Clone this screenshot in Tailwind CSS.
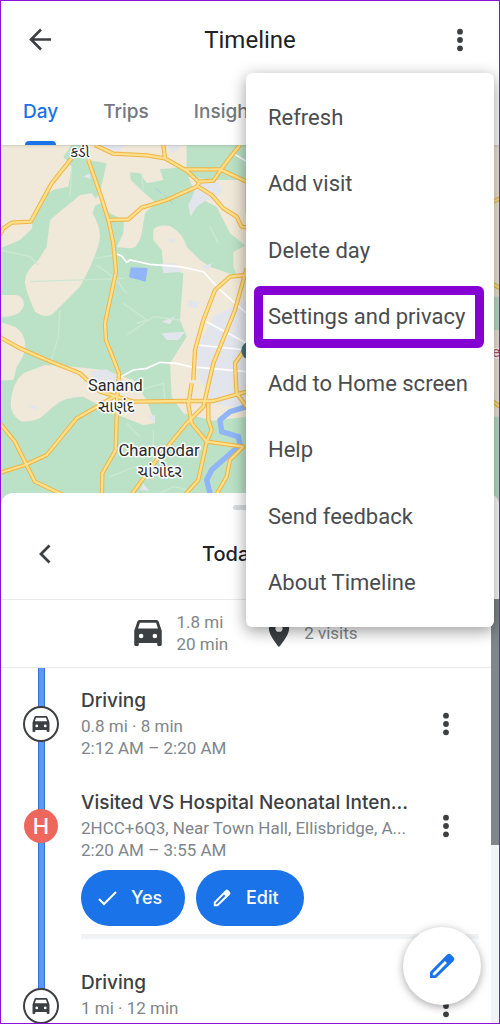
<!DOCTYPE html>
<html lang="en">
<head>
  <meta charset="UTF-8" />
  <meta name="viewport" content="width=device-width, initial-scale=1" />
  <title>Timeline</title>
  <script src="https://cdn.jsdelivr.net/npm/@tailwindcss/browser@4"></script>
</head>
<body class="bg-white font-['Roboto',sans-serif] text-[#3c4043]">

  <!-- shared icons -->
  <svg class="hidden">
    <symbol id="more" viewBox="0 0 24 24">
      <circle cx="12" cy="3.7" r="2.900" /><circle cx="12" cy="12" r="2.900" /><circle cx="12" cy="20.3" r="2.900" />
    </symbol>
    <symbol id="car" viewBox="3 4 18 17">
      <path fill-rule="evenodd" d="M18.92 5.01C18.72 4.42 18.16 4 17.5 4h-11c-.66 0-1.21.42-1.42 1.01L3 11v9c0 .55.45 1 1 1h1c.55 0 1-.45 1-1v-1h12v1c0 .55.45 1 1 1h1c.55 0 1-.45 1-1v-9l-2.08-5.99zM7.5 16a1.5 1.5 0 1 1 0-3 1.5 1.5 0 0 1 0 3zm9 0a1.5 1.5 0 1 1 0-3 1.5 1.5 0 0 1 0 3zM5.5 9.600l1.200-3.800h10.600L18.500 9.600z" />
    </symbol>
    <symbol id="pencil" viewBox="0 0 24 24">
      <path fill-rule="evenodd" d="M20.500 5.300 18.900 3.600a2.300 2.300 0 0 0-3.200 0L3 16.500V21h4.500L20.500 8.400a2.200 2.200 0 0 0 0-3.100zM6.600 18.900H5.100v-1.500l9.100-9.200 1.500 1.500z" />
    </symbol>
  </svg>

  <div class="relative flex h-screen flex-col overflow-hidden border border-[#8a14d4]">

    <header class="relative z-10 bg-white shadow">
      <div class="relative flex h-[78px] items-center justify-between px-[27px]">
        <button type="button" aria-label="Back">
          <svg class="h-6 w-6" viewBox="0 0 24 24" fill="none" stroke="currentColor" stroke-width="2.6"><path d="M23 11.500H3.500M13 1.500 3 11.500 13 21.500" /></svg>
        </button>
        <h1 class="text-2xl text-[#202124]">Timeline</h1>
        <button type="button" aria-label="More options">
          <svg class="h-6 w-6" fill="currentColor"><use href="#more" /></svg>
        </button>
      </div>
      <nav class="flex h-[66px] gap-[45px] px-[22px] font-['Inter',sans-serif] text-[19px] font-medium text-[#74787d]">
        <a href="#day" class="relative flex items-center text-[#1a73e8]">Day<span class="absolute inset-x-[2px] bottom-0 h-1 rounded-t bg-[#1a73e8]"></span></a>
        <a href="#trips" class="flex items-center">Trips</a>
        <a href="#insights" class="flex items-center">Insights</a>
      </nav>
    </header>

    <div class="h-[360px] shrink-0 bg-[#bbe2c6]">
      <svg class="h-full w-full" viewBox="3 435 1494 1080" preserveAspectRatio="xMinYMin slice">
        <defs>
          <path id="roads" d="M215 475 155 550 92 665 35 668 10 685 0 705M265 480 305 595 325 660 340 730 348 815 315 970 318 1020 357 1120 352 1185 347 1350 307 1420 305 1520M285 435 340 461 440 466 495 475 560 512 595 545 640 542 680 485 720 435M490 435 495 475M555 508 660 508 740 545M325 660 385 658 425 623 500 600 590 560 600 545M595 560 635 585 670 625 710 650 725 680 740 682M0 1012 60 1045 140 1080 240 1120 300 1175 400 1205 560 1203 640 1203 740 1175M0 1418 75 1395 140 1365 230 1255 300 1215 350 1185M0 1270 45 1325 105 1445 200 1490M390 1490 470 1380 560 1270 610 1220 640 1090 705 930 740 805M740 825 690 830 645 870 610 960 585 1050 580 1140M575 1150 565 1215 575 1270 620 1325 730 1340 690 1380 680 1430 640 1500M625 1210 625 1260 635 1290 620 1325 595 1440 550 1490M740 1040 705 1090 710 1180 740 1220M1480 605 1500 595M1475 850 1500 865M1460 1190 1500 1220" />
        </defs>
        <g fill="#f0e8d8">
          <path d="M0 435H215L190 470 215 500 205 560 165 568 125 590 95 650 97 685 60 720 0 745zM265 435H560V500L480 508 490 540 440 550 420 520 390 517 392 540 440 585 468 608 435 640 425 700 Q415 745 390 745L350 742 370 700 372 660 330 640 305 610 275 620 300 575 320 490 265 480zM565 530 640 540 740 540V740L690 700 650 620 590 590zM240 585 275 580 290 600 278 640Q300 680 300 710 295 760 240 860L165 935 Q140 960 105 935 80 880 75 850 72 815 115 780L140 740 150 660zM0 885H45Q70 885 72 915 65 945 25 950L0 950zM460 690Q470 672 510 678 550 700 560 740L600 780 630 800 700 825 740 800V1250L640 1262 550 1240 515 1190 510 1090 560 1010 540 960 550 820 490 800 485 750 460 720z" />
          <path d="M0 965 45 980Q75 1000 75 1030 80 1060 50 1100L40 1140 0 1142zM70 1120 135 1095 200 1098 310 1110 400 1140 440 1200 465 1270 430 1275 340 1240 250 1190 Q190 1190 160 1220L120 1255Q80 1270 60 1262 32 1245 32 1210 35 1150 70 1120zM545 930H600L595 945 570 950z" />
          <path d="M700 755 740 735V900L700 800zM1400 435H1500V1500H1400z" />
        </g>
        <path fill="#bbe2c6" d="M1400 890H1500V990H1400zM1400 1250H1500V1520H1400z" />
        <path fill="#bbe2c6" d="M735 435H760V640H735z" />
        <g fill="#e3e5ec">
          <path d="M600 540 655 545 665 570 650 600 620 600 590 620 572 650 565 615zM290 435H380L350 455zM500 435H545L520 460zM485 790 530 790 545 815 490 820zM600 800 637 790 625 810zM500 720 525 715 520 730zM565 900 600 905 590 925 565 920zM485 965 525 948 510 973zM485 1000 555 995 535 1020 500 1020zM335 835 350 828 352 850zM250 530 270 520 272 537z" />
          <path d="M640 950 740 900V1230L640 1210 600 1140 590 1050zM445 1250 465 1245 465 1272zM430 1450 448 1472 420 1470zM85 1218 110 1215 108 1230zM270 1115 320 1108 370 1140 350 1170 290 1160z" />
        </g>
        <path fill="#90b5f8" d="M392 802 443 804 437 845 387 832z" />
        <path fill="none" stroke="#90b5f8" stroke-width="16" d="M740 1220 690 1235 660 1260 665 1295 715 1310 720 1335 680 1370 635 1410 620 1440 630 1480" />
        <path fill="none" stroke="#a6cde0" stroke-width="3" d="m465 565 20 15m10 6 25 27" />
        <g fill="none" stroke="#cbe8d2" stroke-width="4">
          <path d="M0 750 90 770 115 795M215 500 210 590M90 845 370 835M290 795 345 835 380 880M285 775 345 765M370 910 440 960 410 970M380 1005 460 950 540 960M180 930 175 1010 160 1060 155 1080M630 680 655 730M400 1175 490 1150 495 1210M380 1270 420 1310M330 1430 400 1402 460 1400M460 1290 460 1390M440 1500 520 1460 560 1470M425 520 430 570" />
        </g>
        <path fill="none" stroke="#fff" stroke-width="5" d="M350 762 365 768 380 787 390 780 450 793 540 800 610 815 660 870 740 940M360 1132 400 1110 440 1105 480 1087 530 1090 570 1100 740 1115M620 965 740 1030M590 1035 740 1050M700 460 740 485" />
        <!-- main roads: casing first, then fill -->
        <g fill="none" stroke-linejoin="round">
          <use href="#roads" stroke="#efb443" stroke-width="13" />
          <use href="#roads" stroke="#fee08c" stroke-width="7" />
        </g>
        <circle cx="752" cy="1052" r="28" fill="#47707c" />
        <g class="font-['Roboto','Noto_Sans_Gujarati','Noto_Sans',sans-serif]" fill="#27292c" stroke="#fff" stroke-width="9" paint-order="stroke" stroke-linejoin="round" text-anchor="middle">
          <text x="240" y="472" font-size="45">કડી</text>
          <text x="346" y="1174" font-size="49">Sanand</text>
          <text x="348" y="1236" font-size="48">સાણંદ</text>
          <text x="477" y="1367" font-size="50">Changodar</text>
          <text x="479" y="1430" font-size="48">ચાંગોદર</text>
          <text x="1488" y="1072" font-size="46" fill="#c5525b">e</text>
        </g>
      </svg>
    </div>

    <main class="relative z-10 -mt-3 flex min-h-0 flex-1 flex-col rounded-t-xl bg-white">
      <div class="relative flex h-[106px] shrink-0 items-center px-8 pt-4">
        <span class="absolute inset-x-0 top-3 mx-auto h-[5px] w-[34px] rounded-full bg-[#dadce0]"></span>
        <button type="button" aria-label="Previous day">
          <svg class="h-6 w-6" viewBox="0 0 24 24" fill="none" stroke="currentColor" stroke-width="2.800"><path d="M16.500 3.500 8 12l8.500 8.500" /></svg>
        </button>
        <h2 class="mx-auto w-[96px] font-['Inter',sans-serif] text-xl font-medium text-[#202124]">Today</h2>
        <span class="w-6"></span>
      </div>

      <div class="flex min-h-0 flex-1">
        <div class="min-w-0 flex-1 overflow-hidden border-t border-[#e8eaed]">
          <div class="flex h-[68px] items-center justify-center border-b border-[#e8eaed] pb-[2px] text-[17px] leading-[22px] text-[#80868b]">
            <svg class="mr-[14px] h-[26px] w-7 text-[#3c4043]" fill="currentColor"><use href="#car" /></svg>
            <p class="mr-10">1.8 mi<br>20 min</p>
            <svg class="mr-[14px] h-[29px] w-[22px] text-[#3c4043]" viewBox="5 2 14 20" fill="currentColor"><path fill-rule="evenodd" d="M12 2a7 7 0 0 0-7 7c0 5.200 7 13 7 13s7-7.800 7-13a7 7 0 0 0-7-7zm0 9.500a2.500 2.500 0 1 1 0-5 2.500 2.500 0 0 1 0 5z" /></svg>
            <p>2 visits</p>
          </div>

          <ol class="text-[17px] leading-[22px] text-[#80868b]">
            <li class="flex">
              <div class="relative flex w-20 shrink-0 justify-center pt-[38px]">
                <span class="absolute inset-y-0 w-[7px] border-x border-[#3472d5] bg-[#5b98f5]"></span>
                <span class="relative flex h-9 w-9 items-center justify-center rounded-full border-2 border-[#3c4043] bg-white text-[#3c4043]"><svg class="h-4 w-[18px]" fill="currentColor"><use href="#car" /></svg></span>
              </div>
              <div class="flex min-w-0 flex-1 justify-between pt-[21px] pr-[33px] pb-[11px]">
                <div>
                  <h3 class="mb-[2px] font-['Inter',sans-serif] text-[19px] leading-6 font-medium text-[#3c4043]">Driving</h3>
                  <p>0.8 mi · 8 min</p>
                  <p>2:12 AM – 2:20 AM</p>
                </div>
                <button type="button" aria-label="Options for drive" class="self-center"><svg class="h-6 w-6 text-[#3c4043]" fill="currentColor"><use href="#more" /></svg></button>
              </div>
            </li>

            <li class="flex">
              <div class="relative flex w-20 shrink-0 justify-center pt-[39px]">
                <span class="absolute inset-y-0 w-[7px] border-x border-[#3472d5] bg-[#5b98f5]"></span>
                <span class="relative flex h-[34px] w-[34px] items-center justify-center rounded-full bg-[#ee675c] font-['Inter',sans-serif] text-[22px] font-medium text-white">H</span>
              </div>
              <div class="min-w-0 flex-1 pt-[21px] pr-3 pb-[11px]">
                <div class="flex justify-between pr-[21px]">
                  <div class="min-w-0 whitespace-nowrap">
                    <h3 class="mb-[2px] font-['Inter',sans-serif] text-[19px] leading-6 font-medium text-[#3c4043]">Visited VS Hospital Neonatal Inten...</h3>
                    <p>2HCC+6Q3, Near Town Hall, Ellisbridge, A...</p>
                    <p>2:20 AM – 3:55 AM</p>
                  </div>
                  <button type="button" aria-label="Options for visit" class="self-center"><svg class="h-6 w-6 text-[#3c4043]" fill="currentColor"><use href="#more" /></svg></button>
                </div>
                <div class="mt-[9px] flex gap-[11px] font-['Inter',sans-serif] text-lg font-medium text-white">
                  <button type="button" class="flex h-14 w-[104px] items-center gap-[13px] rounded-full bg-[#1a73e8] pl-[15px]">
                    <svg class="h-[22px] w-[22px]" viewBox="0 0 22 22" fill="none" stroke="currentColor" stroke-width="2"><path d="m3 12 5 5L20 5" /></svg>Yes
                  </button>
                  <button type="button" class="flex h-14 w-[108px] items-center gap-[13px] rounded-full bg-[#1a73e8] pl-[15px]">
                    <svg class="h-[22px] w-[22px]" fill="currentColor"><use href="#pencil" /></svg>Edit
                  </button>
                </div>
                <div class="mt-2 h-[5px] bg-[#f1f3f4]"></div>
              </div>
            </li>

            <li class="flex">
              <div class="relative flex w-20 shrink-0 justify-center pt-[38px]">
                <span class="absolute top-0 h-10 w-[7px] border-x border-[#3472d5] bg-[#5b98f5]"></span>
                <span class="relative flex h-9 w-9 items-center justify-center rounded-full border-2 border-[#3c4043] bg-white text-[#3c4043]"><svg class="h-4 w-[18px]" fill="currentColor"><use href="#car" /></svg></span>
              </div>
              <div class="flex min-w-0 flex-1 justify-between pt-[21px] pr-[33px]">
                <div>
                  <h3 class="mb-[2px] font-['Inter',sans-serif] text-[19px] leading-6 font-medium text-[#3c4043]">Driving</h3>
                  <p>1 mi · 12 min</p>
                </div>
                <button type="button" aria-label="Options for drive" class="mt-[23px] self-start"><svg class="h-6 w-6 text-[#3c4043]" fill="currentColor"><use href="#more" /></svg></button>
              </div>
            </li>
          </ol>
        </div>
        <div class="w-2 shrink-0 bg-[#f1f3f4]">
          <div class="h-[58%] bg-[#80868b]"></div>
        </div>
      </div>
    </main>

    <button type="button" aria-label="Edit timeline" class="absolute right-[18px] bottom-[18px] z-20 flex h-[78px] w-[78px] items-center justify-center rounded-full bg-white text-[#1a73e8] shadow-[0_2px_8px_rgba(0,0,0,0.35)]">
      <svg class="h-8 w-8" fill="currentColor"><use href="#pencil" /></svg>
    </button>

    <div role="menu" class="absolute top-[72px] right-[5px] z-30 flex h-[554px] w-[248px] flex-col rounded-md bg-white py-[11px] text-[22px] text-[#4a4c4f] shadow-[0_4px_16px_rgba(0,0,0,0.4)]">
      <button type="button" role="menuitem" class="flex-1 px-[22px] text-left">Refresh</button>
      <button type="button" role="menuitem" class="flex-1 px-[22px] text-left">Add visit</button>
      <button type="button" role="menuitem" class="flex-1 px-[22px] text-left">Delete day</button>
      <button type="button" role="menuitem" class="relative flex-1 px-[22px] text-left whitespace-nowrap">Settings and privacy<span class="absolute inset-y-[2px] right-[10px] left-2 rounded-md border-[9px] border-[#8500d2]"></span></button>
      <button type="button" role="menuitem" class="flex-1 px-[22px] text-left whitespace-nowrap">Add to Home screen</button>
      <button type="button" role="menuitem" class="flex-1 px-[22px] text-left">Help</button>
      <button type="button" role="menuitem" class="flex-1 px-[22px] text-left">Send feedback</button>
      <button type="button" role="menuitem" class="flex-1 px-[22px] text-left">About Timeline</button>
    </div>
  </div>

</body>
</html>
